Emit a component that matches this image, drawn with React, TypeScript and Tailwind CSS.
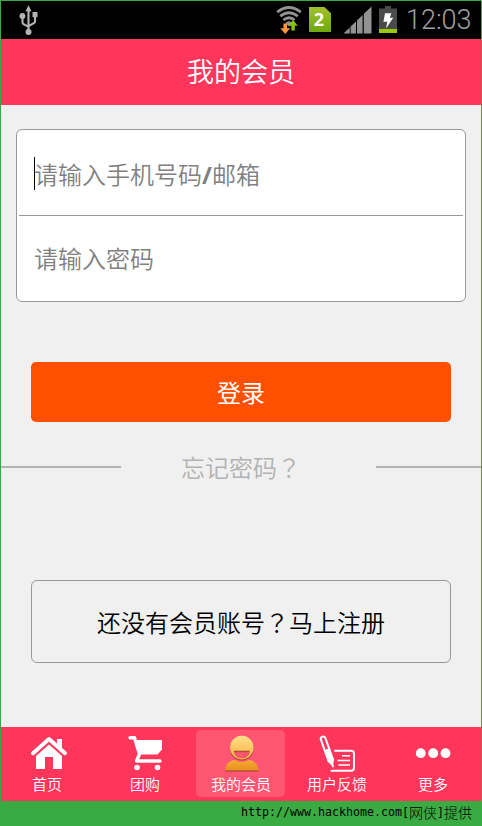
import { FC, ReactNode } from "react";

const HomeIcon = () => (
  <svg width="40" height="38" viewBox="0 0 40 38" fill="white">
    <path d="M28 4h5v10h-5z" />
    <path
      d="M4 18.2 20 4l16 14.2"
      fill="none"
      stroke="white"
      strokeWidth="4"
      strokeLinecap="round"
      strokeLinejoin="round"
    />
    <path d="M7 21 20 9.5 33 21v13h-9V22h-8v12H7z" />
  </svg>
);

const CartIcon = () => (
  <svg width="40" height="38" viewBox="0 0 40 38" fill="white">
    <path
      d="M5 2.8h4.5L14.5 19 11.5 26H35"
      fill="none"
      stroke="white"
      strokeWidth="3.4"
      strokeLinecap="round"
      strokeLinejoin="round"
    />
    <path d="M10.5 5H37v9.5L32.5 19.5H14z" />
    <circle cx="12" cy="32.5" r="2.8" />
    <circle cx="32.5" cy="32.5" r="2.8" />
  </svg>
);

const MemberIcon = () => (
  <svg width="40" height="38" viewBox="0 0 40 38">
    <defs>
      <linearGradient id="face" x1="0" y1="0" x2="0" y2="1">
        <stop offset="0" stopColor="#ffe08a" />
        <stop offset="1" stopColor="#f6ae3c" />
      </linearGradient>
      <linearGradient id="shirt" x1="0" y1="0" x2="0" y2="1">
        <stop offset="0" stopColor="#f5ab38" />
        <stop offset="1" stopColor="#e8901c" />
      </linearGradient>
    </defs>
    <circle cx="20.8" cy="13.7" r="11.8" fill="#a63b3c" />
    <circle cx="20.8" cy="12.6" r="11.8" fill="url(#face)" />
    <path d="M12.8 15.8h16c-.4 4.6-3.6 7.2-8 7.2s-7.6-2.6-8-7.2z" fill="#b04a35" />
    <path d="M13.2 17.2h15.2c-.8 3.6-3.8 5.6-7.6 5.6s-6.8-2-7.6-5.6z" fill="#ff5674" />
    <path
      d="M4 36.6c1-7 4.5-10.2 10-10.5 4 2.6 9.5 2.6 13.5 0 5.5.3 9 3.5 10 10.5z"
      fill="#9c3a30"
    />
    <path
      d="M4 35.4c1-7 4.5-10.2 10-10.5 4 2.6 9.5 2.6 13.5 0 5.5.3 9 3.5 10 10.5z"
      fill="url(#shirt)"
    />
  </svg>
);

const FeedbackIcon = () => (
  <svg width="40" height="38" viewBox="0 0 40 38" fill="none" stroke="white">
    <path
      d="M18 15.8h16q3 0 3 3v14q0 3-3 3H14.5"
      strokeWidth="1.9"
      strokeLinecap="round"
    />
    <path d="M25 20.8h8M20.5 25.5H33M21.5 30H33" strokeWidth="1.5" />
    <g transform="translate(5.5 2) rotate(-19.5)">
      <path d="M-2.4 2q0-2.4 2.4-2.4T2.4 2v12h-4.8z" strokeWidth="2" />
      <path d="M-3.4 14.5h6.8v10.5L1.2 29h-2.4L-3.4 25z" fill="white" stroke="none" />
      <path d="M0 28v4" strokeWidth="2" />
    </g>
  </svg>
);

const MoreIcon = () => (
  <svg width="40" height="38" viewBox="0 0 40 38" fill="white">
    <circle cx="7.8" cy="18.2" r="4.9" />
    <circle cx="20.2" cy="18.2" r="4.9" />
    <circle cx="32.5" cy="18.2" r="4.9" />
  </svg>
);

const UsbIcon = () => (
  <svg width="20" height="32" viewBox="0 0 20 32" fill="#b4b4b4" stroke="#b4b4b4">
    <path d="M9.5 1.2 12.5 7.2H6.5z" stroke="none" />
    <path
      d="M9.5 6v21M3.5 12v6.2q0 1.4 1.2 2l4.8 2.6M16 11v6.2q0 1.4-1.2 2l-5.3 3"
      fill="none"
      strokeWidth="2.1"
    />
    <circle cx="9.5" cy="28" r="3" stroke="none" />
    <circle cx="3.4" cy="12" r="2.9" stroke="none" />
    <path d="M13.5 8h5v5.2h-5z" stroke="none" />
  </svg>
);

const WifiIcon = () => (
  <svg width="26" height="28" viewBox="0 0 26 28" fill="none" stroke="#929292">
    <path
      d="M1.2 6.2q11.8-9.4 23.6 0M4.2 10.2q8.8-7 17.6 0M7.4 14q5.6-4.4 11.2 0"
      strokeWidth="2.8"
    />
    <path d="M9.4 16.8q3.6-3 7.2 0L13 20.6z" fill="#929292" stroke="none" />
    <path d="M7.5 17.6h3.6v4.6h3L9.3 28l-5-5.8h3.2z" fill="#ff9a3c" stroke="none" />
    <path d="M15.4 24.6h3.4v-4.8h3L17.1 14l-4.7 5.8h3z" fill="#86c40c" stroke="none" />
  </svg>
);

const SignalIcon = () => (
  <svg width="29" height="28" viewBox="0 0 29 28" fill="#929292">
    <path d="M.5 27.5 6.7 21.5v6zM7.6 20.6l5.4-5.2v12.1H7.6zM14 14.4l5.6-5.4v18.5H14zM20.8 7.8 28.5.5v27h-7.7z" />
  </svg>
);

const BatteryIcon = () => (
  <svg width="18" height="27" viewBox="0 0 18 27">
    <path d="M6 0h6v2.5h6V27H0V2.5h6z" fill="#4a4a4a" />
    <path d="M0 23h18v4H0z" fill="#99cc00" />
    <path d="M6 7.2h6.4l-1.6 4.6h3.4L7 22.4l1.4-6.6H4.4z" fill="white" />
  </svg>
);

// Simplified fonts push the mark into a corner, the traditional one centres it
const QuestionMark = () => <span className="font-['Noto_Sans_CJK_TC',sans-serif]">？</span>;

const StatusBar = () => (
  <div className="flex h-[38px] shrink-0 bg-black">
    <div className="ml-[18px] mt-[3px]">
      <UsbIcon />
    </div>
    <div className="ml-auto mt-[5px]">
      <WifiIcon />
    </div>
    <div
      className="ml-[7px] mt-[6px] flex h-[25px] w-[22px] items-center justify-center bg-linear-to-b from-[#a0c02c] to-[#6fa80c] pr-[2px] font-['Open_Sans',sans-serif] text-[18px] font-bold text-white
        [clip-path:polygon(0_0,70%_0,100%_25%,100%_100%,0_100%)]"
    >
      2
    </div>
    <div className="ml-[12px] mt-[5px]">
      <SignalIcon />
    </div>
    <div className="ml-[7px] mt-[5px]">
      <BatteryIcon />
    </div>
    <div className="ml-[9px] mr-[8px] mt-[1px] w-[67px] whitespace-nowrap font-['Roboto',sans-serif] text-[27px] font-light leading-[36px] text-[#a0a0a0]">
      12:03
    </div>
  </div>
);

interface NavItemProps {
  label: string;
  icon: ReactNode;
  active?: boolean;
  labelClass?: string;
}

const NavItem: FC<NavItemProps> = ({ label, icon, active, labelClass = "ml-px" }) => (
  <button
    className={`mr-px flex h-[67px] w-[89px] flex-col items-center rounded-[5px] pt-[5px] ${
      active ? "bg-[#ff5674]" : ""
    }`}
  >
    {icon}
    <span className={`text-[15px] leading-[22px] text-white ${labelClass}`}>{label}</span>
  </button>
);

const App = () => (
  <div className="flex h-[826px] w-[482px] flex-col bg-[#3aaa43] px-px pt-px font-['Noto_Sans_CJK_SC',sans-serif] font-[350]">
    <StatusBar />

    <header className="flex h-[66px] shrink-0 items-center justify-center bg-[#ff365b] pb-px text-[27px] text-white">
      我的会员
    </header>

    <main className="flex h-[622px] flex-col bg-[#f0f0f0] pt-6">
      <div className="mx-[15px] flex h-[173px] flex-col rounded-md border border-[#999] bg-white px-[2px] text-2xl text-[#808080]">
        <div className="flex h-[86px] items-center border-b border-[#999] pl-[15px]">
          <span className="mr-[-1px] mt-px h-[33px] w-px bg-black" />
          <span className="pt-[3px]">
            请输入手机号码
            <span className="inline-block w-[10px] font-['Open_Sans',sans-serif] font-bold">
              /
            </span>
            邮箱
          </span>
        </div>
        <div className="flex flex-1 items-center pb-[2px] pl-[15px]">请输入密码</div>
      </div>

      <button className="mx-[30px] mt-[60px] h-[60px] rounded-[5px] bg-[#ff5000] text-2xl font-normal text-white">
        登录
      </button>

      <div className="mt-[27px] flex h-9 items-center">
        <span className="h-[2px] w-[120px] bg-[#b2b2b2]" />
        <a className="ml-[60px] text-2xl text-[#b2b2b2]">
          忘记密码
          <QuestionMark />
        </a>
        <span className="ml-auto h-[2px] w-[105px] bg-[#b2b2b2]" />
      </div>

      <button className="mx-[30px] mt-[95px] h-[83px] rounded-md border border-[#999] text-2xl text-black">
        还没有会员账号
        <QuestionMark />
        马上注册
      </button>
    </main>

    <nav className="grid h-[74px] shrink-0 grid-cols-5 justify-items-center bg-[#ff365b] pt-[3px]">
      <NavItem label="首页" icon={<HomeIcon />} labelClass="mr-[3px]" />
      <NavItem label="团购" icon={<CartIcon />} />
      <NavItem label="我的会员" icon={<MemberIcon />} active />
      <NavItem label="用户反馈" icon={<FeedbackIcon />} />
      <NavItem label="更多" icon={<MoreIcon />} />
    </nav>

    <footer className="flex h-[25px] items-center justify-end whitespace-pre pb-[2px] pr-[9px] font-['DejaVu_Sans_Mono','Noto_Sans_CJK_SC',monospace] text-[11.63px] leading-none text-black">
      http://www.hackhome.com[<span className="text-[14px] font-light">网侠</span>]
      <span className="text-[14px] font-light">提供</span>
    </footer>
  </div>
);

export default App;
